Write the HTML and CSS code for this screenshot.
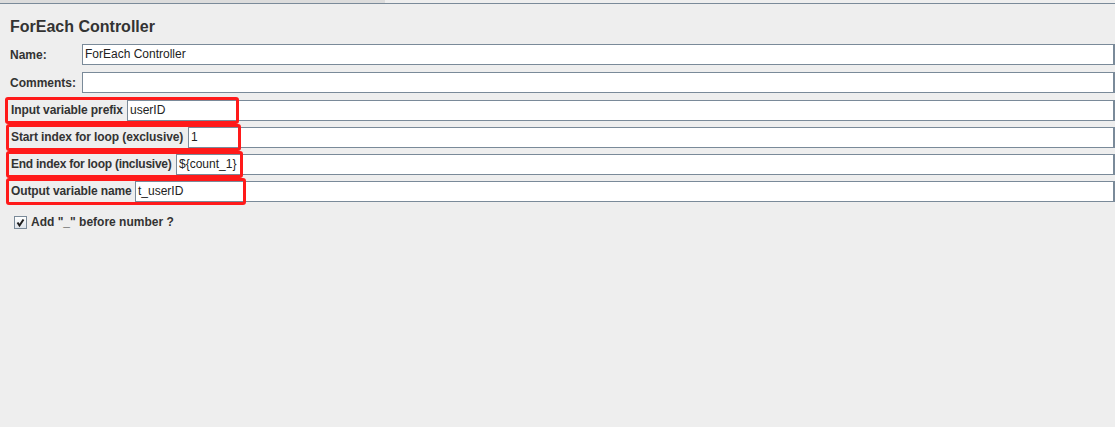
FILE: index.html
```html
<!DOCTYPE html>
<html>
<head>
<meta charset="utf-8">
<link rel="stylesheet" href="styles.css">
</head>
<body>
<div class="topbar"><div class="topbar-seg"></div></div>
<div class="panel">
  <h1 class="title">ForEach Controller</h1>
  <div class="row row-name">
    <label class="lbl">Name:</label>
    <div class="field">ForEach Controller</div>
  </div>
  <div class="row row-comments">
    <label class="lbl">Comments:</label>
    <div class="field"></div>
  </div>
  <div class="param p1">
    <span class="mark m1"></span>
    <label class="plabel l1">Input variable prefix</label>
    <div class="field">userID</div>
  </div>
  <div class="param">
    <span class="mark m2"></span>
    <label class="plabel l2">Start index for loop (exclusive)</label>
    <div class="field">1</div>
  </div>
  <div class="param">
    <span class="mark m3"></span>
    <label class="plabel l3">End index for loop (inclusive)</label>
    <div class="field">${count_1}</div>
  </div>
  <div class="param">
    <span class="mark m4"></span>
    <label class="plabel l4">Output variable name</label>
    <div class="field">t_userID</div>
  </div>
  <div class="check">
    <span class="box"><svg width="11" height="11" viewBox="0 0 11 11"><path d="M2.5 5.5 L4.5 8.5 L8.5 2.5" fill="none" stroke="#1e1e1e" stroke-width="2"/></svg></span>
    <span class="check-text">Add "_" before number ?</span>
  </div>
</div>
</body>
</html>
```

FILE: styles.css
```css
html, body {
  margin: 0;
  padding: 0;
  background: #eeeeee;
  width: 1115px;
  height: 427px;
  overflow: hidden;
  font-family: "Liberation Sans", Arial, sans-serif;
  color: #333333;
}
.topbar {
  height: 3px;
  border-bottom: 1px solid #7a8a99;
  background: #eeeeee;
}
.topbar-seg {
  width: 385px;
  height: 3px;
  background: #dcdcdc;
}
.title {
  margin: 0;
  padding: 13px 0 0 10px;
  font-size: 16px;
  font-weight: bold;
  line-height: 20px;
  color: #333333;
  height: 27px;
}
.row {
  display: flex;
  align-items: center;
  height: 21px;
  margin-left: 10px;
}
.row-comments { margin-top: 7px; }
.lbl {
  width: 72px;
  font-size: 12px;
  font-weight: bold;
  color: #333333;
}
.field {
  flex: 1;
  height: 19px;
  border: 1px solid #7a8a99;
  border-right-width: 2px;
  background: #ffffff;
  font-size: 12px;
  line-height: 19px;
  padding-left: 2px;
  color: #222222;
  white-space: nowrap;
  overflow: hidden;
}
.param {
  position: relative;
  display: flex;
  align-items: center;
  height: 21px;
  margin-left: 8px;
  margin-top: 6px;
}
.param.p1 { margin-top: 7px; }
.plabel {
  box-sizing: border-box;
  font-size: 12px;
  font-weight: bold;
  color: #333333;
  padding-left: 3px;
  line-height: 21px;
  white-space: nowrap;
  letter-spacing: -0.1px;
  overflow: hidden;
}
.l1 { width: 119px; }
.l2 { width: 180px; }
.l3 { width: 168px; letter-spacing: -0.25px; }
.l4 { width: 127px; }
.mark {
  position: absolute;
  left: -3px;
  top: -3px;
  height: 21px;
  border: 3px solid #ff1a1a;
  border-radius: 3px;
  pointer-events: none;
}
.m1 { width: 228px; }
.m2 { left: -2px; width: 229px; }
.m3 { left: -2px; width: 231px; }
.m4 { left: -2px; width: 234px; }
.check {
  display: flex;
  align-items: center;
  margin: 13px 0 0 14px;
}
.box {
  width: 11px;
  height: 11px;
  border: 1px solid #7a8a99;
  background: linear-gradient(#ffffff, #dde3ea);
  display: flex;
  margin-right: 4px;
}
.check-text {
  font-size: 12px;
  font-weight: bold;
  color: #333333;
}
```
